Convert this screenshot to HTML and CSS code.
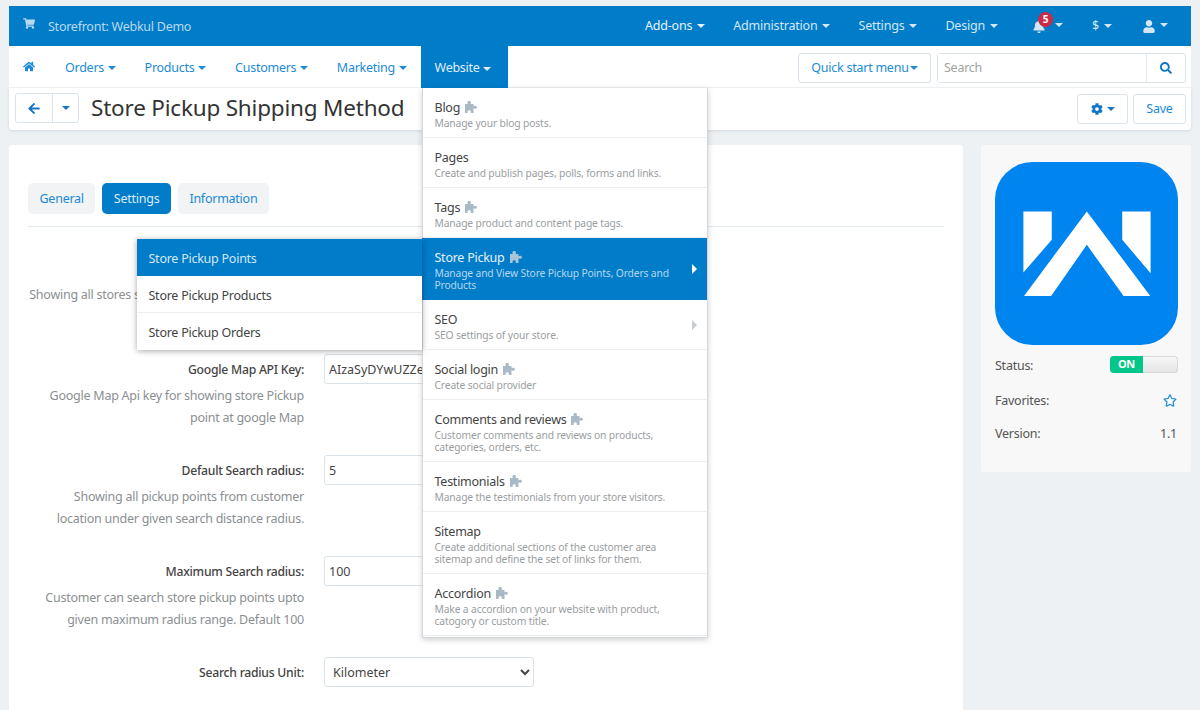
FILE: index.html
```html
<!DOCTYPE html>
<html lang="en">
<head>
<meta charset="utf-8">
<title>Store Pickup Shipping Method</title>
<link rel="stylesheet" href="styles.css">
</head>
<body>
<svg class="defs" width="0" height="0" aria-hidden="true">
  <symbol id="puzzle" viewBox="0 0 12 12"><path d="M0 3H2.800C2.600 2.600 2.400 2.200 2.400 1.700 2.400.7 3.200 0 4.200 0S6 .7 6 1.700C6 2.200 5.800 2.600 5.600 3H8.500V5.200C8.900 4.900 9.400 4.700 10 4.700 11.100 4.700 12 5.300 12 6.200S11.100 7.700 10 7.700C9.400 7.700 8.900 7.500 8.500 7.200V12H5.800V10.600C5.800 9.800 5.200 9.200 4.200 9.200S2.600 9.800 2.600 10.600V12H0Z"/></symbol>
</svg>
<header class="topbar">
  <a class="store">
    <svg class="ico cart" viewBox="0 0 576 512"><path d="M528.12 301.319l47.273-208C578.806 78.301 567.391 64 551.99 64H159.208l-9.166-44.81C147.758 8.021 137.93 0 126.529 0H24C10.745 0 0 10.745 0 24v16c0 13.255 10.745 24 24 24h69.883l70.248 343.435C147.325 417.1 136 435.222 136 456c0 30.928 25.072 56 56 56s56-25.072 56-56c0-15.674-6.447-29.835-16.824-40h209.647C430.447 426.165 424 440.326 424 456c0 30.928 25.072 56 56 56s56-25.072 56-56c0-22.172-12.888-41.332-31.579-50.405l5.517-24.276c3.413-15.018-8.002-29.319-23.403-29.319H218.117l-6.545-32h293.145c11.206 0 20.92-7.754 23.403-18.681z"/></svg>
    <span>Storefront: Webkul Demo</span>
  </a>
  <nav class="topnav">
    <a class="top-strong">Add-ons<i class="caret"></i></a>
    <a>Administration<i class="caret"></i></a>
    <a>Settings<i class="caret"></i></a>
    <a>Design<i class="caret"></i></a>
    <a class="bell-item">
      <svg class="ico bell" viewBox="0 0 448 512"><path d="M224 512c35.32 0 63.97-28.65 63.97-64H160.03c0 35.35 28.65 64 63.97 64zm215.39-149.71c-19.32-20.76-55.47-51.99-55.47-154.29 0-77.7-54.48-139.9-127.94-155.16V32c0-17.67-14.32-32-31.98-32s-31.98 14.33-31.98 32v20.84C118.56 68.1 64.08 130.3 64.08 208c0 102.3-36.15 133.53-55.47 154.29-6 6.45-8.66 14.16-8.61 21.71.11 16.4 12.98 32 32.1 32h383.8c19.12 0 32-15.6 32.1-32 .05-7.55-2.61-15.27-8.61-21.71z"/></svg>
      <b class="badge">5</b><i class="caret"></i>
    </a>
    <a class="dollar">$<i class="caret"></i></a>
    <a class="user-item">
      <svg class="ico user" viewBox="0 0 448 512"><path d="M224 256c70.7 0 128-57.3 128-128S294.7 0 224 0 96 57.3 96 128s57.3 128 128 128zm89.6 32h-16.7c-22.2 10.2-46.9 16-72.9 16s-50.6-5.8-72.9-16h-16.7C60.2 288 0 348.2 0 422.4V464c0 26.5 21.5 48 48 48h352c26.500 0 48-21.500 48-48v-41.600c0-74.200-60.200-134.400-134.400-134.400z"/></svg>
      <i class="caret"></i>
    </a>
  </nav>
</header>

<div class="mainnav">
  <a class="nav-item home"><svg class="ico" viewBox="0 0 576 512"><path d="M280.37 148.26L96 300.11V464a16 16 0 0 0 16 16l112.06-.29a16 16 0 0 0 15.92-16V368a16 16 0 0 1 16-16h64a16 16 0 0 1 16 16v95.64a16 16 0 0 0 16 16.05L464 480a16 16 0 0 0 16-16V300L295.67 148.26a12.19 12.19 0 0 0-15.3 0zM571.6 251.47L488 182.56V44.05a12 12 0 0 0-12-12h-56a12 12 0 0 0-12 12v72.61L318.47 43a48 48 0 0 0-61 0L4.34 251.47a12 12 0 0 0-1.6 16.9l25.5 31A12 12 0 0 0 45.15 301l235.22-193.74a12.19 12.19 0 0 1 15.3 0L530.9 301a12 12 0 0 0 16.9-1.6l25.5-31a12 12 0 0 0-1.7-16.93z"/></svg></a>
  <a class="nav-item">Orders<i class="caret"></i></a>
  <a class="nav-item">Products<i class="caret"></i></a>
  <a class="nav-item">Customers<i class="caret"></i></a>
  <a class="nav-item">Marketing<i class="caret"></i></a>
  <div class="nav-item active">Website<i class="caret"></i>
    <ul class="menu">
      <li><div class="mt">Blog<svg class="pz"><use href="#puzzle"/></svg></div><div class="md">Manage your blog posts.</div></li>
      <li><div class="mt">Pages</div><div class="md">Create and publish pages, polls, forms and links.</div></li>
      <li><div class="mt">Tags<svg class="pz"><use href="#puzzle"/></svg></div><div class="md">Manage product and content page tags.</div></li>
      <li class="sel"><div class="mt">Store Pickup<svg class="pz"><use href="#puzzle"/></svg></div><div class="md">Manage and View Store Pickup Points, Orders and Products</div><i class="arrow"></i>
        <ul class="submenu">
          <li class="on">Store Pickup Points</li>
          <li>Store Pickup Products</li>
          <li>Store Pickup Orders</li>
        </ul>
      </li>
      <li><div class="mt">SEO</div><div class="md">SEO settings of your store.</div><i class="arrow"></i></li>
      <li><div class="mt">Social login<svg class="pz"><use href="#puzzle"/></svg></div><div class="md">Create social provider</div></li>
      <li><div class="mt">Comments and reviews<svg class="pz"><use href="#puzzle"/></svg></div><div class="md">Customer comments and reviews on products, categories, orders, etc.</div></li>
      <li><div class="mt">Testimonials<svg class="pz"><use href="#puzzle"/></svg></div><div class="md">Manage the testimonials from your store visitors.</div></li>
      <li><div class="mt">Sitemap</div><div class="md">Create additional sections of the customer area sitemap and define the set of links for them.</div></li>
      <li><div class="mt">Accordion<svg class="pz"><use href="#puzzle"/></svg></div><div class="md">Make a accordion on your website with product, catogory or custom title.</div></li>
    </ul>
  </div>
  <div class="nav-right">
    <a class="btn quick">Quick start menu<i class="caret tight"></i></a>
    <div class="search">
      <input class="search-input" placeholder="Search">
      <a class="search-btn"><svg class="ico" viewBox="0 0 512 512"><path d="M505 442.7L405.3 343c-4.500-4.500-10.600-7-17-7H372c27.600-35.300 44-79.700 44-128C416 93.100 322.900 0 208 0S0 93.100 0 208s93.100 208 208 208c48.300 0 92.700-16.400 128-44v16.300c0 6.400 2.500 12.500 7 17l99.700 99.700c9.400 9.400 24.600 9.400 33.900 0l28.300-28.300c9.400-9.400 9.400-24.600.1-34zM208 336c-70.700 0-128-57.200-128-128 0-70.700 57.200-128 128-128 70.700 0 128 57.200 128 128 0 70.700-57.200 128-128 128z"/></svg></a>
    </div>
  </div>
</div>

<div class="toolbar">
  <div class="backgroup">
    <a class="back"><svg class="ico" viewBox="0 0 448 512"><path d="M257.500 445.100l-22.200 22.200c-9.400 9.400-24.600 9.400-33.900 0L7 273c-9.400-9.400-9.400-24.600 0-33.900L201.400 44.700c9.400-9.400 24.600-9.400 33.900 0l22.200 22.200c9.500 9.500 9.300 25-.4 34.300L136.600 216H424c13.300 0 24 10.700 24 24v32c0 13.300-10.700 24-24 24H136.600l120.500 114.800c9.800 9.300 10 24.800.4 34.300z"/></svg></a>
    <a class="backcaret"><i class="caret flush"></i></a>
  </div>
  <h1>Store Pickup Shipping Method</h1>
  <div class="tool-right">
    <a class="btn gear"><svg class="ico" viewBox="0 0 512 512"><path d="M487.400 315.700l-42.600-24.600c4.300-23.200 4.300-47 0-70.200l42.600-24.600c4.900-2.800 7.100-8.600 5.500-14-11.100-35.600-30-67.800-54.700-94.600-3.800-4.100-10-5.100-14.800-2.300L380.800 110c-17.900-15.400-38.500-27.300-60.800-35.100V25.800c0-5.600-3.900-10.500-9.400-11.700-36.700-8.200-74.300-7.800-109.200 0-5.500 1.200-9.400 6.100-9.400 11.700V75c-22.200 7.900-42.800 19.800-60.800 35.100L88.700 85.500c-4.900-2.800-11-1.900-14.800 2.300-24.700 26.700-43.600 58.900-54.700 94.600-1.700 5.400.6 11.200 5.500 14L67.300 221c-4.300 23.200-4.300 47 0 70.200l-42.600 24.600c-4.900 2.800-7.100 8.600-5.500 14 11.100 35.600 30 67.800 54.700 94.600 3.800 4.100 10 5.100 14.800 2.300l42.600-24.600c17.900 15.400 38.500 27.300 60.800 35.100v49.200c0 5.600 3.900 10.500 9.400 11.700 36.700 8.200 74.300 7.800 109.200 0 5.500-1.200 9.400-6.100 9.400-11.700v-49.200c22.200-7.900 42.800-19.800 60.800-35.100l42.600 24.600c4.900 2.800 11 1.900 14.800-2.300 24.700-26.700 43.600-58.900 54.700-94.600 1.500-5.500-.7-11.300-5.600-14.100zM256 336c-44.100 0-80-35.900-80-80s35.900-80 80-80 80 35.900 80 80-35.900 80-80 80z"/></svg><i class="caret"></i></a>
    <a class="btn save">Save</a>
  </div>
</div>

<div class="content">
  <main class="panel">
    <div class="tabs">
      <a class="tab">General</a>
      <a class="tab on">Settings</a>
      <a class="tab">Information</a>
    </div>
    <form class="form">
      <div class="row">
        <div class="left"><label></label><p>Showing all stores selected by admin on the map</p></div>
        <input class="field" value="">
      </div>
      <div class="row">
        <div class="left"><label>Google Map API Key:</label><p>Google Map Api key for showing store Pickup point at google Map</p></div>
        <input class="field" value="AIzaSyDYwUZZeXq4fQ2rLm8Tn0pVb">
      </div>
      <div class="row">
        <div class="left"><label>Default Search radius:</label><p>Showing all pickup points from customer location under given search distance radius.</p></div>
        <input class="field" value="5">
      </div>
      <div class="row">
        <div class="left"><label>Maximum Search radius:</label><p>Customer can search store pickup points upto given maximum radius range. Default 100</p></div>
        <input class="field" value="100">
      </div>
      <div class="row">
        <div class="left"><label>Search radius Unit:</label></div>
        <select class="field"><option>Kilometer</option><option>Mile</option></select>
      </div>
    </form>
  </main>
  <aside class="side">
    <svg class="logo" viewBox="0 0 548 548"><rect width="548" height="548" rx="112" fill="#0084f0"/><path fill="#fff" d="M85 148h85v85l-85 98zM381 148h85v185l-85-100zM275 148L465 401H385L275 248 168 401H87z"/></svg>
    <div class="info status"><span>Status:</span><span class="toggle"><b>ON</b><i></i></span></div>
    <div class="info"><span>Favorites:</span><svg class="ico star" viewBox="0 0 576 512"><path d="M528.100 171.500L382 150.200 316.700 17.800c-11.700-23.600-45.600-23.900-57.400 0L194 150.200 47.900 171.500c-26.200 3.800-36.700 36.100-17.700 54.600l105.700 103-25 145.500c-4.500 26.300 23.200 46 46.400 33.700L288 439.600l130.700 68.700c23.200 12.200 50.900-7.400 46.400-33.700l-25-145.500 105.700-103c19-18.500 8.500-50.800-17.700-54.600zM388.600 312.300l23.700 138.400L288 385.400l-124.300 65.300 23.700-138.400-100.600-98 139-20.200 62.200-126 62.200 126 139 20.200-100.600 98z"/></svg></div>
    <div class="info"><span>Version:</span><span>1.1</span></div>
  </aside>
</div>
</body>
</html>
```

FILE: styles.css
```css
* { box-sizing: border-box; }
html, body { margin: 0; height: 710px; overflow: hidden; }
body {
  padding: 6px 9px 0;
  background: #edf1f4;
  color: #444;
  font: 12.5px/18px "Noto Sans", sans-serif;
  letter-spacing: -0.25px;
  display: flex;
  flex-direction: column;
}
.defs { position: absolute; }
a { color: #1c8ad6; text-decoration: none; }
.ico { display: inline-block; fill: currentColor; width: 13px; height: 13px; }
.caret {
  display: inline-block;
  width: 0; height: 0;
  margin-left: 5px;
  vertical-align: 2px;
  border-left: 4px solid transparent;
  border-right: 4px solid transparent;
  border-top: 4px solid currentColor;
}
.caret.tight { margin-left: 1px; }
.caret.flush { margin-left: 0; vertical-align: middle; }

.topbar {
  height: 40px;
  background: #007cc9;
  display: flex;
  justify-content: space-between;
  flex: none;
}
.store { display: flex; align-items: center; color: #b9d9ef; padding-left: 14px; }
.store span { margin-top: 1px; margin-left: 13px; }
.cart { width: 12px; height: 11px; margin-top: -6px; }
.topnav { display: flex; align-items: center; color: #d5e7f4; padding-right: 23px; letter-spacing: -0.2px; }
.topnav a { color: inherit; margin-left: 28px; }
.top-strong { color: #e9f3fa !important; }
.bell-item { position: relative; margin-left: 35px !important; display: flex; align-items: center; }
.bell { width: 12px; height: 13px; }
.badge {
  position: absolute; left: 5px; top: -8px;
  width: 15px; height: 15px;
  border-radius: 50%;
  background: #c92a45;
  color: #fff;
  font-size: 10px; line-height: 15px; text-align: center;
  letter-spacing: 0;
}
.bell-item .caret { margin-left: 10px; margin-top: -2px; }
.dollar { margin-left: 29px !important; }
.user-item { margin-left: 31px !important; display: flex; align-items: center; }
.user { width: 12px; height: 13px; }
.user-item .caret { margin-left: 5px; margin-top: -2px; }

.mainnav {
  height: 42px;
  background: #fff;
  display: flex;
  flex: none;
  border-bottom: 1px solid #f1f3f5;
}
.nav-item {
  position: relative;
  padding: 2px 14px 0;
  display: flex;
  align-items: center;
  color: #1c8ad6;
  margin-right: 1px;
}
.nav-item .caret { margin-left: 3.5px; margin-top: 1px; }
.home { padding-left: 14px; width: 41px; }
.home .ico { width: 12px; height: 11px; margin-top: -2px; }
.active { background: #007cc9; color: #e1eef8; height: 42px; margin: 0 0 0 -1px; width: 87px; }
.nav-right { margin-left: auto; display: flex; align-items: center; gap: 6px; padding: 2px 5px 0 0; }
.btn {
  display: flex; align-items: center; justify-content: center;
  background: #fff;
  border: 1px solid #dbe3ea;
  border-radius: 3px;
  height: 30px;
}
.quick { width: 133px; }
.search {
  width: 249px; height: 30px;
  display: flex;
  border: 1px solid #dbe3ea;
  border-radius: 3px;
}
.search-input {
  flex: 1; min-width: 0; border: 0; outline: 0; padding: 0 6px;
  font: inherit; letter-spacing: inherit; color: #444;
}
.search-input::placeholder { color: #a3a3a3; opacity: 1; }
.search-btn { width: 39px; border-left: 1px solid #e3e9ee; color: #1277c4; display: flex; align-items: center; justify-content: center; }
.search-btn .ico { width: 12px; height: 12px; }

.toolbar {
  height: 42px;
  background: #fff;
  display: flex;
  align-items: center;
  flex: none;
  padding: 0 5px 0 6px;
  border-radius: 0 0 3px 3px;
  box-shadow: 0 1px 3px rgba(60, 80, 100, .15);
}
.backgroup { display: flex; height: 30px; border: 1px solid #dbe3ea; border-radius: 3px; width: 64px; margin-top: -2px; }
.back { flex: 1; display: flex; align-items: center; justify-content: center; color: #1277c4; border-right: 1px solid #dbe3ea; }
.back .ico { width: 12px; height: 13px; }
.backcaret { width: 25px; display: flex; align-items: center; justify-content: center; color: #1277c4; }
.toolbar h1 {
  margin: -2px 0 0 12px;
  font-size: 22.5px; line-height: 30px; font-weight: 400; color: #333;
  letter-spacing: -0.2px;
}
.tool-right { margin-left: auto; display: flex; gap: 5px; }
.gear { width: 51px; color: #1277c4; }
.gear .ico { width: 12px; height: 12px; }
.gear .caret { margin-left: 4px; vertical-align: 0; }
.save { width: 53px; }

.content { display: flex; flex: 1; margin-top: 15px; gap: 18px; align-items: flex-start; min-height: 0; }
.panel {
  width: 954px; height: 100%;
  background: #fff;
  border-radius: 3px 3px 0 0;
  padding: 38px 19px 0;
}
.tabs { display: flex; gap: 7px; height: 44px; border-bottom: 1px solid #e2e9f0; align-items: flex-start; }
.tab {
  height: 31px; padding: 0 11.5px;
  border-radius: 5px;
  background: #f2f3f4;
  display: flex; align-items: center;
}
.tab.on { background: #007cc9; color: #dcebf7; }

.form { padding-top: 26px; display: flex; flex-direction: column; gap: 27px; }
.row { display: flex; gap: 20px; align-items: flex-start; }
.left { width: 276px; text-align: right; flex: none; padding-top: 1px; }
.left label { display: block; line-height: 30px; height: 30px; color: #444; font-size: 12.2px; font-weight: 500; }
.left p { margin: 0; line-height: 22px; height: 43px; color: #8b8f92; }
.field {
  width: 210px; height: 30px;
  border: 1px solid #dbe3ea;
  border-radius: 3px;
  padding: 0 4px;
  background: #fff;
  font: inherit; letter-spacing: 0; color: #444;
}

.side {
  width: 210px; height: 327px;
  background: #f8f8f8;
  border-radius: 3px;
  padding: 17px 13px 0 14px;
  display: flex; flex-direction: column;
}
.logo { width: 183px; height: 183px; flex: none; display: block; }
.info { display: flex; justify-content: space-between; align-items: center; height: 33.5px; padding: 1px 1px 0 0; color: #555; }
.status { margin: 3px 0 2px; padding: 3px 0 0; }
.toggle {
  display: flex; width: 68px; height: 17px; margin-top: -4px;
  border-radius: 4px;
  overflow: hidden;
  box-shadow: inset 0 0 0 1px #d8d8d8;
  background: linear-gradient(#f8f8f8, #e4e4e4);
}
.toggle b { width: 33px; background: #03c68a; color: #fff; font-size: 11px; line-height: 16px; text-align: center; }
.star { width: 14px; height: 13px; color: #1c8ad6; }

.menu, .submenu { list-style: none; margin: 0; padding: 0; background: #fff; }
.menu {
  position: absolute; left: 1px; top: 42px; z-index: 10;
  width: 286px; height: 550px;
  color: #444;
  border: 1px solid #d4d8dc;
  border-top: 0;
  box-shadow: 0 2px 6px rgba(0, 0, 0, .18);
}
.menu > li {
  position: relative;
  padding: 10px 28px 8px 12px;
  border-bottom: 1px solid #eceff1;
}
.mt { height: 18px; padding-top: 1px; display: flex; align-items: center; }
.md { margin-top: 1px; font-size: 10.3px; line-height: 12px; color: #9a9ea1; letter-spacing: -0.15px; }
.pz { width: 12px; height: 12px; fill: #a9b9c6; margin-left: 5px; margin-top: -2px; }
.menu > li.sel { background: #007cc9; border-bottom-color: #007cc9; color: #e6f1f9; margin-left: -1px; padding-left: 13px; }
.sel > .md { color: #b7d6ec; }
.sel .pz { fill: #a9c4d8; }
.arrow {
  position: absolute; right: 10px; top: 50%; margin-top: -5px;
  width: 0; height: 0;
  border-top: 5px solid transparent;
  border-bottom: 5px solid transparent;
  border-left: 5px solid #c5ccd2;
}
.sel > .arrow { border-left-color: #fff; }
.submenu {
  position: absolute; right: 100%; top: 1px;
  width: 285px;
  color: #444;
  box-shadow: 0 1px 6px rgba(0, 0, 0, .35);
}
.submenu li {
  height: 37px; line-height: 39px; padding: 0 12px;
  border-bottom: 1px solid #eceff1;
}
.submenu li:last-child { border-bottom: 0; }
.submenu li.on { background: #007cc9; color: #d5e7f4; border-bottom: 0; }
```
